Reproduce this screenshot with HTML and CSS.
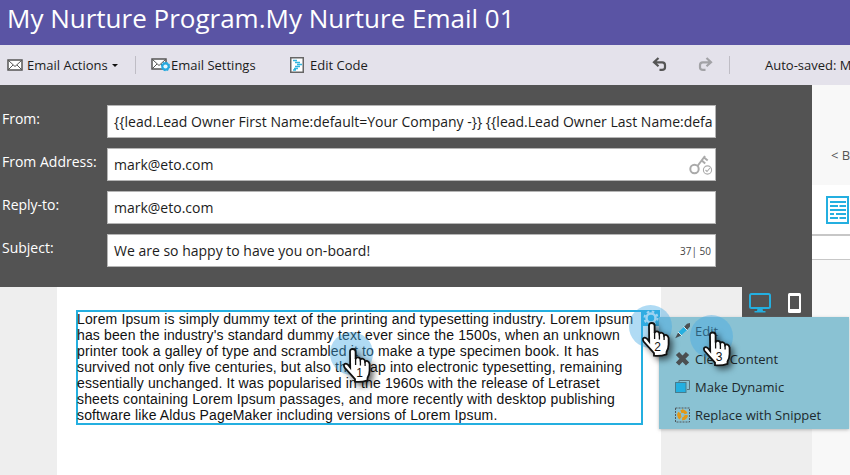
FILE: index.html
```html
<!DOCTYPE html>
<html lang="en">
<head>
<meta charset="utf-8">
<title>My Nurture Email 01</title>
<link rel="stylesheet" href="styles.css">
</head>
<body>
<svg class="defs" width="0" height="0">
  <defs>
    <path id="hand" d="M7 3.7Q7 1 9.8 1T12.6 3.7V11Q13 9.3 15 9.4T17.4 11.6Q18.2 10.4 20 10.8T22.1 13.5Q23 12.6 24.5 13.1T26.6 16V22.5Q26.5 27 24.5 30V32.3Q18 34.6 12 33.7V31.2L1.6 19.6Q0 16.6 2 15.8T7.2 19.5Z"/>
    <g id="envelope" fill="none" stroke="#555"><rect x="1" y="1" width="14" height="10" fill="#fff" stroke-width="1.5"/><path d="M1.500 1.500L8 7.500l6.500-6M1.500 10.500L6 6M14.500 10.500L10 6" stroke-width="1"/></g>
  </defs>
</svg>
<div class="app">
  <header class="title">My Nurture Program.My Nurture Email 01</header>
  <nav class="toolbar">
    <div class="tool actions">
      <svg width="16" height="12"><use href="#envelope"/></svg>
      <span>Email Actions</span><i class="caret"></i>
    </div>
    <i class="divider"></i>
    <div class="tool settings">
      <svg width="20" height="14"><use href="#envelope"/><circle cx="14.500" cy="8.500" r="4.200" fill="#27a9de"/><circle cx="14.500" cy="8.500" r="4" fill="none" stroke="#27a9de" stroke-width="1.500" stroke-dasharray="1.600 1.540"/><circle cx="14.500" cy="8.500" r="2.100" fill="#e5f5fc"/></svg>
      <span>Email Settings</span>
    </div>
    <div class="tool code">
      <svg width="14" height="16"><rect x=".75" y=".75" width="12.500" height="14.500" fill="#fff" stroke="#666" stroke-width="1.500"/><path d="M3 3.500h4M5 5.500h5M7 7.500h5M5 9.500h5M4 11.500h4M3 13h3" stroke="#32b5df" stroke-width="1.300"/></svg>
      <span>Edit Code</span>
    </div>
    <div class="history">
      <svg width="15" height="15" fill="none" stroke="#555" stroke-width="2.200"><path d="M6.500 1L2 5.300l4.500 4M2 5.300h8.200Q13 5.300 13 8v2.500Q13 12.800 10 12.800H7.500"/></svg>
      <svg width="15" height="15" fill="none" stroke="#a2a2a6" stroke-width="2.200"><path d="M8.500 1L13 5.300l-4.500 4M13 5.300H4.800Q2 5.300 2 8v2.500Q2 12.800 5 12.800h2.500"/></svg>
    </div>
    <i class="divider"></i>
    <span class="saved">Auto-saved: M</span>
  </nav>
  <main class="workspace">
    <div class="editor">
      <form class="fields">
        <label>From:</label><div class="input"><span>{{lead.Lead Owner First Name:default=Your Company -}} {{lead.Lead Owner Last Name:defa</span></div>
        <label>From Address:</label><div class="input"><span>mark@eto.com</span>
          <svg class="key" width="24" height="22" fill="none" stroke="#aaa"><circle cx="5.500" cy="15" r="4.200" stroke-width="2"/><path d="M8.500 12L16 2M12.800 6.500l3.400 3M15 3.500l3.700 3" stroke-width="2"/><circle cx="18.500" cy="16" r="4.100" stroke-width="1.100"/><path d="M16.500 16l1.500 1.500 3-3.500" stroke-width="1.100"/></svg></div>
        <label>Reply-to:</label><div class="input"><span>mark@eto.com</span></div>
        <label>Subject:</label><div class="input"><span>We are so happy to have you on-board!</span><small>37| 50</small></div>
      </form>
      <section class="canvas">
        <article class="sheet">
          <div class="block"><p>Lorem Ipsum is simply dummy text of the printing and typesetting industry. Lorem Ipsum<br>has been the industry's standard dummy text ever since the 1500s, when an unknown<br>printer took a galley of type and scrambled it to make a type specimen book. It has<br>survived not only five centuries, but also the leap into electronic typesetting, remaining<br>essentially unchanged. It was popularised in the 1960s with the release of Letraset<br>sheets containing Lorem Ipsum passages, and more recently with desktop publishing<br>software like Aldus PageMaker including versions of Lorem Ipsum.</p></div>
          <svg class="gear" width="17" height="16"><rect width="17" height="16" fill="#24afe0"/><circle cx="8" cy="8" r="4.500" fill="none" stroke="#e0f2fb" stroke-width="2.500"/><circle cx="8" cy="8" r="6.500" fill="none" stroke="#e0f2fb" stroke-width="2" stroke-dasharray="2.550 2.550"/></svg>
        </article>
        <div class="devices">
          <svg width="22" height="20"><rect x="1" y="1" width="20" height="14" rx="1.500" fill="none" stroke="#24afe0" stroke-width="2"/><path d="M8.500 15.500h5l.5 2.500h2.500v1.500h-11V18H8z" fill="#24afe0"/></svg>
          <svg width="13" height="20"><rect width="13" height="20" rx="1.500" fill="#fff"/><rect x="2" y="3" width="9" height="13" fill="#535353"/></svg>
        </div>
      </section>
    </div>
    <aside class="side">
      <div class="back">&lt; B</div>
      <div class="tab"><svg width="24" height="28"><rect x="1" y="1" width="21" height="26" fill="#fff" stroke="#24afe0" stroke-width="2"/><path d="M4 6h16M4 10h8m1.500 0H20M4 14h16M4 18h4m2 0h10M4 22h8m1.500 0H20" stroke="#24afe0" stroke-width="2"/></svg></div>
      <div class="strip"></div>
    </aside>
  </main>
  <div class="menu">
    <div><svg width="16" height="16"><path d="M1.500 14.500L4 8.500l5-4.500 3 3-5.500 5z" fill="#24afe0"/><path d="M9 4L12 .8l3-.8v3.500L12 7zM.2 15.200l3-5.700 3 3z" fill="#4b4f51"/><path d="M8.500 3.500l4 4M3 9l4 4" stroke="#d5edf4"/></svg><span>Edit</span></div>
    <div><svg width="16" height="16"><path d="M2.500 2.500l10 10.500M12.500 2.500L2.500 13" stroke="#4b4f51" stroke-width="4.500"/></svg><span>Clear Content</span></div>
    <div><svg width="16" height="16"><path d="M4 3V1.500h10.500v9H12" fill="none" stroke="#59747d"/><rect x=".5" y="3.500" width="10.500" height="10" fill="#24afe0" stroke="#477c8d"/></svg><span>Make Dynamic</span></div>
    <div><svg width="16" height="16"><rect x=".5" y="1" width="14" height="14" fill="none" stroke="#50595d" stroke-dasharray="2 1"/><circle cx="7.500" cy="8" r="3.800" fill="none" stroke="#e39817" stroke-width="3" stroke-dasharray="6.200 1.700"/><path d="M7.500 1.800l3 3-4 1.500zM13 9.500l-3.500 3-1-4zM2 8l3.500-2 1 4z" fill="#e39817"/></svg><span>Replace with Snippet</span></div>
  </div>
  <svg class="pointer p1" width="60" height="65"><circle class="halo" cx="21.500" cy="21.500" r="21.500"/><g transform="translate(13 16)"><use class="hand" href="#hand"/><path d="M12.600 10v7M17.400 12v5.500M22.100 13v5M7.200 18v2" stroke="#111" stroke-width="1.300"/><text x="16.500" y="29">1</text></g></svg>
  <svg class="pointer p2" width="60" height="65"><circle class="halo" cx="21.500" cy="21.500" r="21.500"/><g transform="translate(13 17)"><use class="hand" href="#hand"/><path d="M12.600 10v7M17.400 12v5.500M22.100 13v5M7.200 18v2" stroke="#111" stroke-width="1.300"/><text x="15.500" y="29">2</text></g></svg>
  <svg class="pointer p3" width="60" height="65"><circle class="halo" cx="21.500" cy="21.500" r="21.500"/><g transform="translate(13 16.500)"><use class="hand" href="#hand"/><path d="M12.600 10v7M17.400 12v5.500M22.100 13v5M7.200 18v2" stroke="#111" stroke-width="1.300"/><text x="16" y="29">3</text></g></svg>
</div>
</body>
</html>
```
FILE: styles.css
```css
* { box-sizing: border-box; }
body { margin: 0; font-family: "Open Sans", sans-serif; overflow: hidden; }
svg { display: block; flex: none; }
.defs { position: absolute; }
.app { position: relative; width: 850px; height: 475px; overflow: hidden; display: flex; flex-direction: column; }
.title { height: 45px; flex: none; background: #5a54a4; color: #fff; font-size: 26px; line-height: 36px; padding-left: 7px; white-space: nowrap; }
.toolbar { height: 40px; flex: none; background: #e4e2eb; display: flex; align-items: center; color: #1c1c1c; font-size: 13px; white-space: nowrap; }
.toolbar > * { flex: none; }
.tool { display: flex; align-items: center; }
.actions { width: 135px; padding-left: 7px; gap: 4px; }
.caret { border: 3px solid transparent; border-top-color: #111; border-bottom: 0; }
.divider { width: 1px; height: 18px; background: #bfbdc5; }
.settings { width: 139px; margin-left: 15px; }
.code { width: 160px; gap: 6px; }
.history { display: flex; gap: 31px; margin-left: 202px; margin-right: 16px; padding-bottom: 2px; }
.saved { padding-left: 35px; }
.workspace { flex: 1; display: flex; min-height: 0; }
.editor { width: 812px; display: flex; flex-direction: column; }
.fields { height: 202px; flex: none; margin: 0; background: #535353; display: grid; grid-template-columns: 107px 609px; grid-auto-rows: 33px; row-gap: 10px; padding-top: 20px; }
label { color: #fff; font-size: 14px; line-height: 27px; padding-left: 2px; white-space: nowrap; }
.input { background: #fff; border: 1px solid #b5b5b5; display: flex; align-items: center; font-size: 14px; color: #1c1c1c; padding: 0 2px 0 6px; overflow: hidden; white-space: nowrap; }
.input span { flex: 1; }
small { font-size: 10px; margin-right: 2px; color: #444; }
.canvas { flex: 1; display: flex; background: #eee; padding-left: 57px; }
.sheet { width: 604px; background: #fff; padding: 23px 0 0 19px; display: flex; align-items: flex-start; }
.block { width: 567px; height: 115px; flex: none; border: 2px solid #24afe0; }
.block p { margin: -1px 0 0 -1px; font: 14px/16px "Liberation Sans", sans-serif; color: #111; white-space: nowrap; letter-spacing: .137px; }
.devices { margin-left: 81px; width: 70px; height: 30px; background: #535353; display: flex; align-items: center; gap: 17px; padding: 2px 0 0 7px; }
.side { flex: 1; background: #f8f8f8; overflow: hidden; }
.back { height: 100px; padding: 61px 0 0 19px; font-size: 13px; line-height: 18px; color: #555; white-space: nowrap; }
.tab { height: 51px; background: #fff; padding: 11px 0 0 14px; border-bottom: 2px solid #c7c7c7; }
.strip { height: 24px; background: #fff; border-bottom: 1px solid #c7c7c7; }
.menu { position: absolute; left: 659px; top: 317px; width: 190px; height: 112px; background: #8ac2d3; box-shadow: 0 1px 3px #8888; font-size: 13px; color: #1d2a2e; }
.menu div { height: 28px; display: flex; align-items: center; padding-left: 16px; gap: 4px; white-space: nowrap; }
.pointer { position: absolute; overflow: visible; }
.p1 { left: 330px; top: 332px; }
.p2 { left: 628.5px; top: 305px; }
.p3 { left: 690px; top: 315px; }
.halo { fill: #43a9e5; fill-opacity: .42; }
.hand { fill: #fff; stroke: #111; stroke-width: 1.8px; filter: drop-shadow(3px 3px 3px #0009); }
.pointer text { font: 12px "Liberation Sans", sans-serif; text-anchor: middle; fill: #111; }
```
